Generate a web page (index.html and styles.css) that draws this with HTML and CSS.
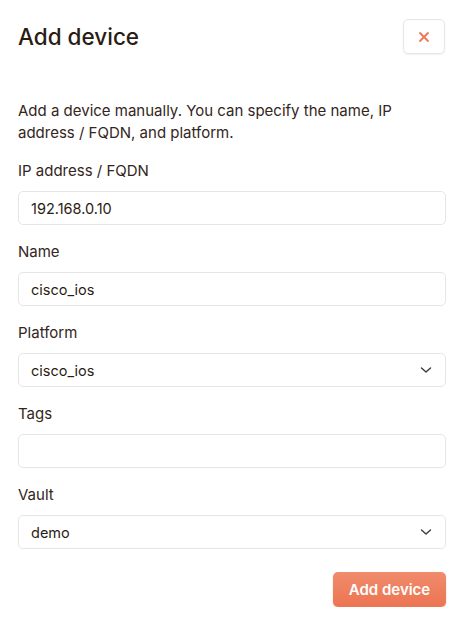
FILE: index.html
```html
<!DOCTYPE html>
<html>
<head>
<meta charset="utf-8">
<link rel="stylesheet" href="styles.css">
</head>
<body>
<div class="dialog">
  <div class="header">
    <h1 class="title">Add device</h1>
    <button class="close" type="button" aria-label="Close">
      <svg width="12" height="12" viewBox="0 0 12 12"><path d="M2 2L10 10M10 2L2 10" stroke="#ee7657" stroke-width="1.8" stroke-linecap="round"/></svg>
    </button>
  </div>
  <p class="desc">Add a device manually. You can specify the name, IP address / FQDN, and platform.</p>
  <div class="field">
    <label class="label">IP address / FQDN</label>
    <div class="input">192.168.0.10</div>
  </div>
  <div class="field">
    <label class="label">Name</label>
    <div class="input">cisco_ios</div>
  </div>
  <div class="field">
    <label class="label">Platform</label>
    <div class="input select"><span>cisco_ios</span>
      <svg class="chev" width="12" height="8" viewBox="0 0 12 8"><path d="M1.5 2L6 6L10.5 2" fill="none" stroke="#3a3a3a" stroke-width="1.4" stroke-linecap="round" stroke-linejoin="round"/></svg>
    </div>
  </div>
  <div class="field">
    <label class="label">Tags</label>
    <div class="input"></div>
  </div>
  <div class="field">
    <label class="label">Vault</label>
    <div class="input select"><span>demo</span>
      <svg class="chev" width="12" height="8" viewBox="0 0 12 8"><path d="M1.5 2L6 6L10.5 2" fill="none" stroke="#3a3a3a" stroke-width="1.4" stroke-linecap="round" stroke-linejoin="round"/></svg>
    </div>
  </div>
  <div class="actions">
    <button class="primary" type="button">Add device</button>
  </div>
</div>
</body>
</html>
```
FILE: styles.css
```css
* { box-sizing: border-box; }
html, body { margin: 0; padding: 0; background: #fff; }
body {
  font-family: Inter, "Noto Sans", sans-serif;
  color: #2e2119;
}
.dialog {
  padding: 19px 17px 0 18px;
}
.header {
  display: flex;
  justify-content: space-between;
  align-items: center;
  height: 35px;
}
.title {
  margin: 0;
  font-size: 22.5px;
  font-weight: 500;
  line-height: 28px;
  color: #2a1c12;
}
.close {
  width: 42px;
  height: 35px;
  margin-right: 1px;
  border: 1px solid #e6e6e6;
  border-radius: 5px;
  background: #fff;
  display: flex;
  align-items: center;
  justify-content: center;
  padding: 0;
  box-shadow: 0 1px 2px rgba(0,0,0,0.06);
}
.desc {
  margin: 46px 0 0 0;
  font-size: 15px;
  line-height: 22px;
  color: #33261c;
}
.field {
  margin-top: 17px;
  display: flex;
  flex-direction: column;
}
.label {
  font-size: 15px;
  line-height: 20px;
  color: #33261c;
  margin-bottom: 10px;
}
.input {
  height: 34px;
  border: 1px solid #e6e6e6;
  border-radius: 5px;
  padding: 0 12px;
  display: flex;
  align-items: center;
  font-size: 14.5px;
  color: #2a1c12;
  background: #fff;
}
.select { justify-content: space-between; padding-right: 13px; }
.chev { display: block; }
.actions {
  display: flex;
  justify-content: flex-end;
  margin-top: 23px;
}
.primary {
  width: 113px;
  height: 35px;
  border: 0;
  border-radius: 5px;
  background: linear-gradient(#f08c6d, #ec7452);
  color: #fff;
  font-family: Inter, "Noto Sans", sans-serif;
  font-size: 15px;
  font-weight: 600;
  padding: 0;
  box-shadow: 0 1px 2px rgba(200,80,40,0.25);
}
```
